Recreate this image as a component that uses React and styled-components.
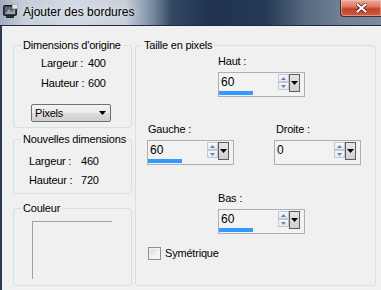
import React from 'react';
import styled, { createGlobalStyle } from 'styled-components';

const GlobalStyle = createGlobalStyle`
  html, body {
    margin: 0;
    padding: 0;
    background: #f0f0f0;
  }
  body {
    font-family: "Liberation Sans", Arial, sans-serif;
    font-size: 11px;
    letter-spacing: -0.2px;
    color: #000;
  }
`;

const Window = styled.div`
  width: 381px;
  height: 290px;
  display: flex;
  flex-direction: column;
  overflow: hidden;
  background: #f0f0f0;
`;

const TitleBar = styled.div`
  height: 25px;
  flex-shrink: 0;
  display: flex;
  align-items: flex-start;
  border-bottom: 1px solid #1d2b3d;
  background: linear-gradient(90deg, #9fadbd 0px, #c4cdd8 22px, #d3dae3 70px, #c8d0da 125px, #8192a7 150px, #324863 172px, #1f334e 210px, #233955 265px, #55697f 305px, #6f8197 340px, #7a8ba0 381px);
`;

const TitleIcon = styled.svg`
  width: 15px;
  height: 14px;
  margin: 4px 0 0 3px;
  flex-shrink: 0;
`;

const TitleText = styled.span`
  margin: 5px 0 0 5px;
  font-size: 12px;
  line-height: 15px;
  letter-spacing: 0;
  white-space: nowrap;
  color: #000;
  text-shadow: 0 0 6px rgba(255, 255, 255, 0.8);
`;

const CloseButton = styled.div`
  margin-left: auto;
  width: 41px;
  height: 17px;
  flex-shrink: 0;
  box-sizing: border-box;
  display: flex;
  align-items: center;
  justify-content: center;
  border: 1px solid #4b2b26;
  border-top: none;
  border-right: none;
  border-radius: 0 0 0 4px;
  background: linear-gradient(#e9aa98 0%, #db7c67 40%, #c4432b 55%, #cd5b3f 100%);
  box-shadow: inset 0 0 0 1px rgba(255, 210, 200, 0.45);
`;

const Content = styled.div`
  flex: 1;
  display: flex;
  align-items: stretch;
  gap: 3px;
  padding: 12px 0 4px 11px;
  border-left: 2px solid #2c3b50;
  min-height: 0;
`;

const LeftColumn = styled.div`
  width: 119px;
  flex-shrink: 0;
  display: flex;
  flex-direction: column;
`;

const Group = styled.fieldset`
  margin: ${p => p.$mt || 0}px 0 0 0;
  padding: 0 0 ${p => p.$pb || 0}px 0;
  min-width: 0;
  border: 1px solid #d5dfe5;
  border-radius: 3px;
  box-sizing: border-box;
  width: ${p => p.$w}px;
  flex-shrink: 0;
`;

const Legend = styled.legend`
  margin-left: ${p => p.$ml || 7}px;
  padding: 0 2px;
  line-height: 14px;
  font-size: 11px;
  white-space: nowrap;
`;

const InfoGrid = styled.div`
  display: grid;
  grid-template-columns: ${p => p.$labelWidth}px auto;
  row-gap: ${p => p.$rowGap}px;
  padding: ${p => p.$pt}px 0 0 ${p => p.$pl}px;
  line-height: 14px;
  white-space: nowrap;
`;

const UnitSelect = styled.div`
  margin: 14px 0 0 17px;
  width: 80px;
  height: 18px;
  box-sizing: border-box;
  display: flex;
  align-items: center;
  justify-content: space-between;
  padding: 0 4px 0 3px;
  border: 1px solid #707070;
  border-radius: 2px;
  background: linear-gradient(#f2f2f2 0%, #ebebeb 50%, #dddddd 51%, #cfcfcf 100%);
`;

const Swatch = styled.div`
  margin: 6px 0 0 18px;
  width: 80px;
  height: 58px;
  box-sizing: border-box;
  border-top: 1px solid #a0a0a0;
  border-left: 1px solid #a0a0a0;
`;

const SizeGroup = styled(Group)`
  display: flex;
  flex-direction: column;
  padding-top: 2px;
`;

const FieldBlock = styled.div`
  display: flex;
  flex-direction: column;
  gap: 4px;
  margin-left: ${p => p.$ml}px;
  margin-top: ${p => p.$mt || 0}px;
`;

const FieldLabel = styled.span`
  line-height: 14px;
  white-space: nowrap;
  padding-left: ${p => p.$pl || 0}px;
`;

const SideRow = styled.div`
  display: flex;
  margin-top: 25px;
`;

const SpinBox = styled.div`
  width: 87px;
  height: 25px;
  box-sizing: border-box;
  display: flex;
  border: 1px solid #a9b0b8;
  background: #f2f2f2;
`;

const ValueArea = styled.div`
  flex: 1;
  display: flex;
  flex-direction: column;
  padding: 2px 0 1px 0;
`;

const ValueText = styled.span`
  padding-left: 2px;
  font-size: 12px;
  line-height: 14px;
  letter-spacing: 0;
`;

const ValueBar = styled.div`
  margin-top: auto;
  height: 4px;
  background: #3399ff;
`;

const Spinner = styled.div`
  margin-top: 1px;
  width: 11px;
  display: flex;
  flex-direction: column;
`;

const SpinButton = styled.div`
  height: 8px;
  box-sizing: border-box;
  display: flex;
  align-items: center;
  justify-content: center;
  border: 1px solid #c3c9d2;
  background: linear-gradient(#f7f8fa, #e4e8ee);
`;

const DropButton = styled.div`
  margin: 1px 4px 0 0;
  width: 11px;
  height: 18px;
  box-sizing: border-box;
  display: flex;
  align-items: center;
  justify-content: center;
  border: 1px solid #5c5c5c;
  background: linear-gradient(#e6e6e6, #cfcfcf);
`;

const CheckRow = styled.label`
  display: flex;
  align-items: center;
  gap: 4px;
  margin: 12px 0 0 12px;
  line-height: 14px;
`;

const CheckBox = styled.span`
  width: 13px;
  height: 13px;
  box-sizing: border-box;
  border: 1px solid #8f8f8f;
  background: linear-gradient(135deg, #d8d8d8 0%, #f0f0f0 60%, #fafafa 100%);
  box-shadow: inset 0 0 0 1px #f4f4f4;
`;

function Arrow({ up, color }) {
  return (
    <svg width="5" height="3" viewBox="0 0 5 3">
      <path d={up ? 'M0 3 L2.5 0 L5 3 Z' : 'M0 0 L5 0 L2.5 3 Z'} fill={color} />
    </svg>
  );
}

function SpinField({ value }) {
  return (
    <SpinBox>
      <ValueArea>
        <ValueText>{value}</ValueText>
        {value > 0 && <ValueBar style={{ width: `${Math.round(value * 0.57)}px` }} />}
      </ValueArea>
      <Spinner>
        <SpinButton><Arrow up color="#6b80b5" /></SpinButton>
        <SpinButton><Arrow color="#6b80b5" /></SpinButton>
      </Spinner>
      <DropButton>
        <svg width="7" height="4" viewBox="0 0 7 4">
          <path d="M0 0 L7 0 L3.5 4 Z" fill="#000" />
        </svg>
      </DropButton>
    </SpinBox>
  );
}

export default function App() {
  return (
    <>
      <GlobalStyle />
      <Window>
        <TitleBar>
          <TitleIcon viewBox="0 0 15 14">
            <rect x="0.5" y="1.5" width="13" height="10" rx="1" fill="#3a3d42" stroke="#1c1e22" />
            <rect x="2" y="3" width="10" height="7" fill="#5c6470" />
            <path d="M2 10 L6 5 L9 8 L12 4 L12 10 Z" fill="#9aa3ad" />
            <rect x="9" y="0" width="6" height="5" fill="#dfe3e8" stroke="#555" strokeWidth="0.6" />
            <rect x="3" y="12" width="8" height="2" fill="#2a2c30" />
          </TitleIcon>
          <TitleText>Ajouter des bordures</TitleText>
          <CloseButton>
            <svg width="11" height="10" viewBox="0 0 11 10">
              <path d="M1.5 1.5 L9.5 8.5 M9.5 1.5 L1.5 8.5" stroke="#4a1a12" strokeWidth="3.4" strokeLinecap="square" />
              <path d="M1.5 1.5 L9.5 8.5 M9.5 1.5 L1.5 8.5" stroke="#ffffff" strokeWidth="2" strokeLinecap="square" />
            </svg>
          </CloseButton>
        </TitleBar>

        <Content>
          <LeftColumn>
            <Group $w={119} $pb={5}>
              <Legend>Dimensions d'origine</Legend>
              <InfoGrid $labelWidth={47} $rowGap={6} $pt={4} $pl={27}>
                <span>Largeur :</span><span>400</span>
                <span>Hauteur :</span><span>600</span>
              </InfoGrid>
              <UnitSelect>
                <span>Pixels</span>
                <svg width="7" height="4" viewBox="0 0 7 4">
                  <path d="M0 0 L7 0 L3.5 4 Z" fill="#000" />
                </svg>
              </UnitSelect>
            </Group>

            <Group $w={119} $mt={4} $pb={6}>
              <Legend>Nouvelles dimensions</Legend>
              <InfoGrid $labelWidth={52} $rowGap={5} $pt={8} $pl={15}>
                <span>Largeur :</span><span>460</span>
                <span>Hauteur :</span><span>720</span>
              </InfoGrid>
            </Group>

            <Group $w={119} $mt={7} $pb={6}>
              <Legend>Couleur</Legend>
              <Swatch />
            </Group>
          </LeftColumn>

          <SizeGroup $w={241}>
            <Legend $ml={6}>Taille en pixels</Legend>
            <FieldBlock $ml={82}>
              <FieldLabel>Haut :</FieldLabel>
              <SpinField value={60} />
            </FieldBlock>

            <SideRow>
              <FieldBlock $ml={11}>
                <FieldLabel $pl={1}>Gauche :</FieldLabel>
                <SpinField value={60} />
              </FieldBlock>
              <FieldBlock $ml={40}>
                <FieldLabel $pl={2}>Droite :</FieldLabel>
                <SpinField value={0} />
              </FieldBlock>
            </SideRow>

            <FieldBlock $ml={82} $mt={26}>
              <FieldLabel>Bas :</FieldLabel>
              <SpinField value={60} />
            </FieldBlock>

            <CheckRow>
              <CheckBox />
              <span>Symétrique</span>
            </CheckRow>
          </SizeGroup>
        </Content>
      </Window>
    </>
  );
}
